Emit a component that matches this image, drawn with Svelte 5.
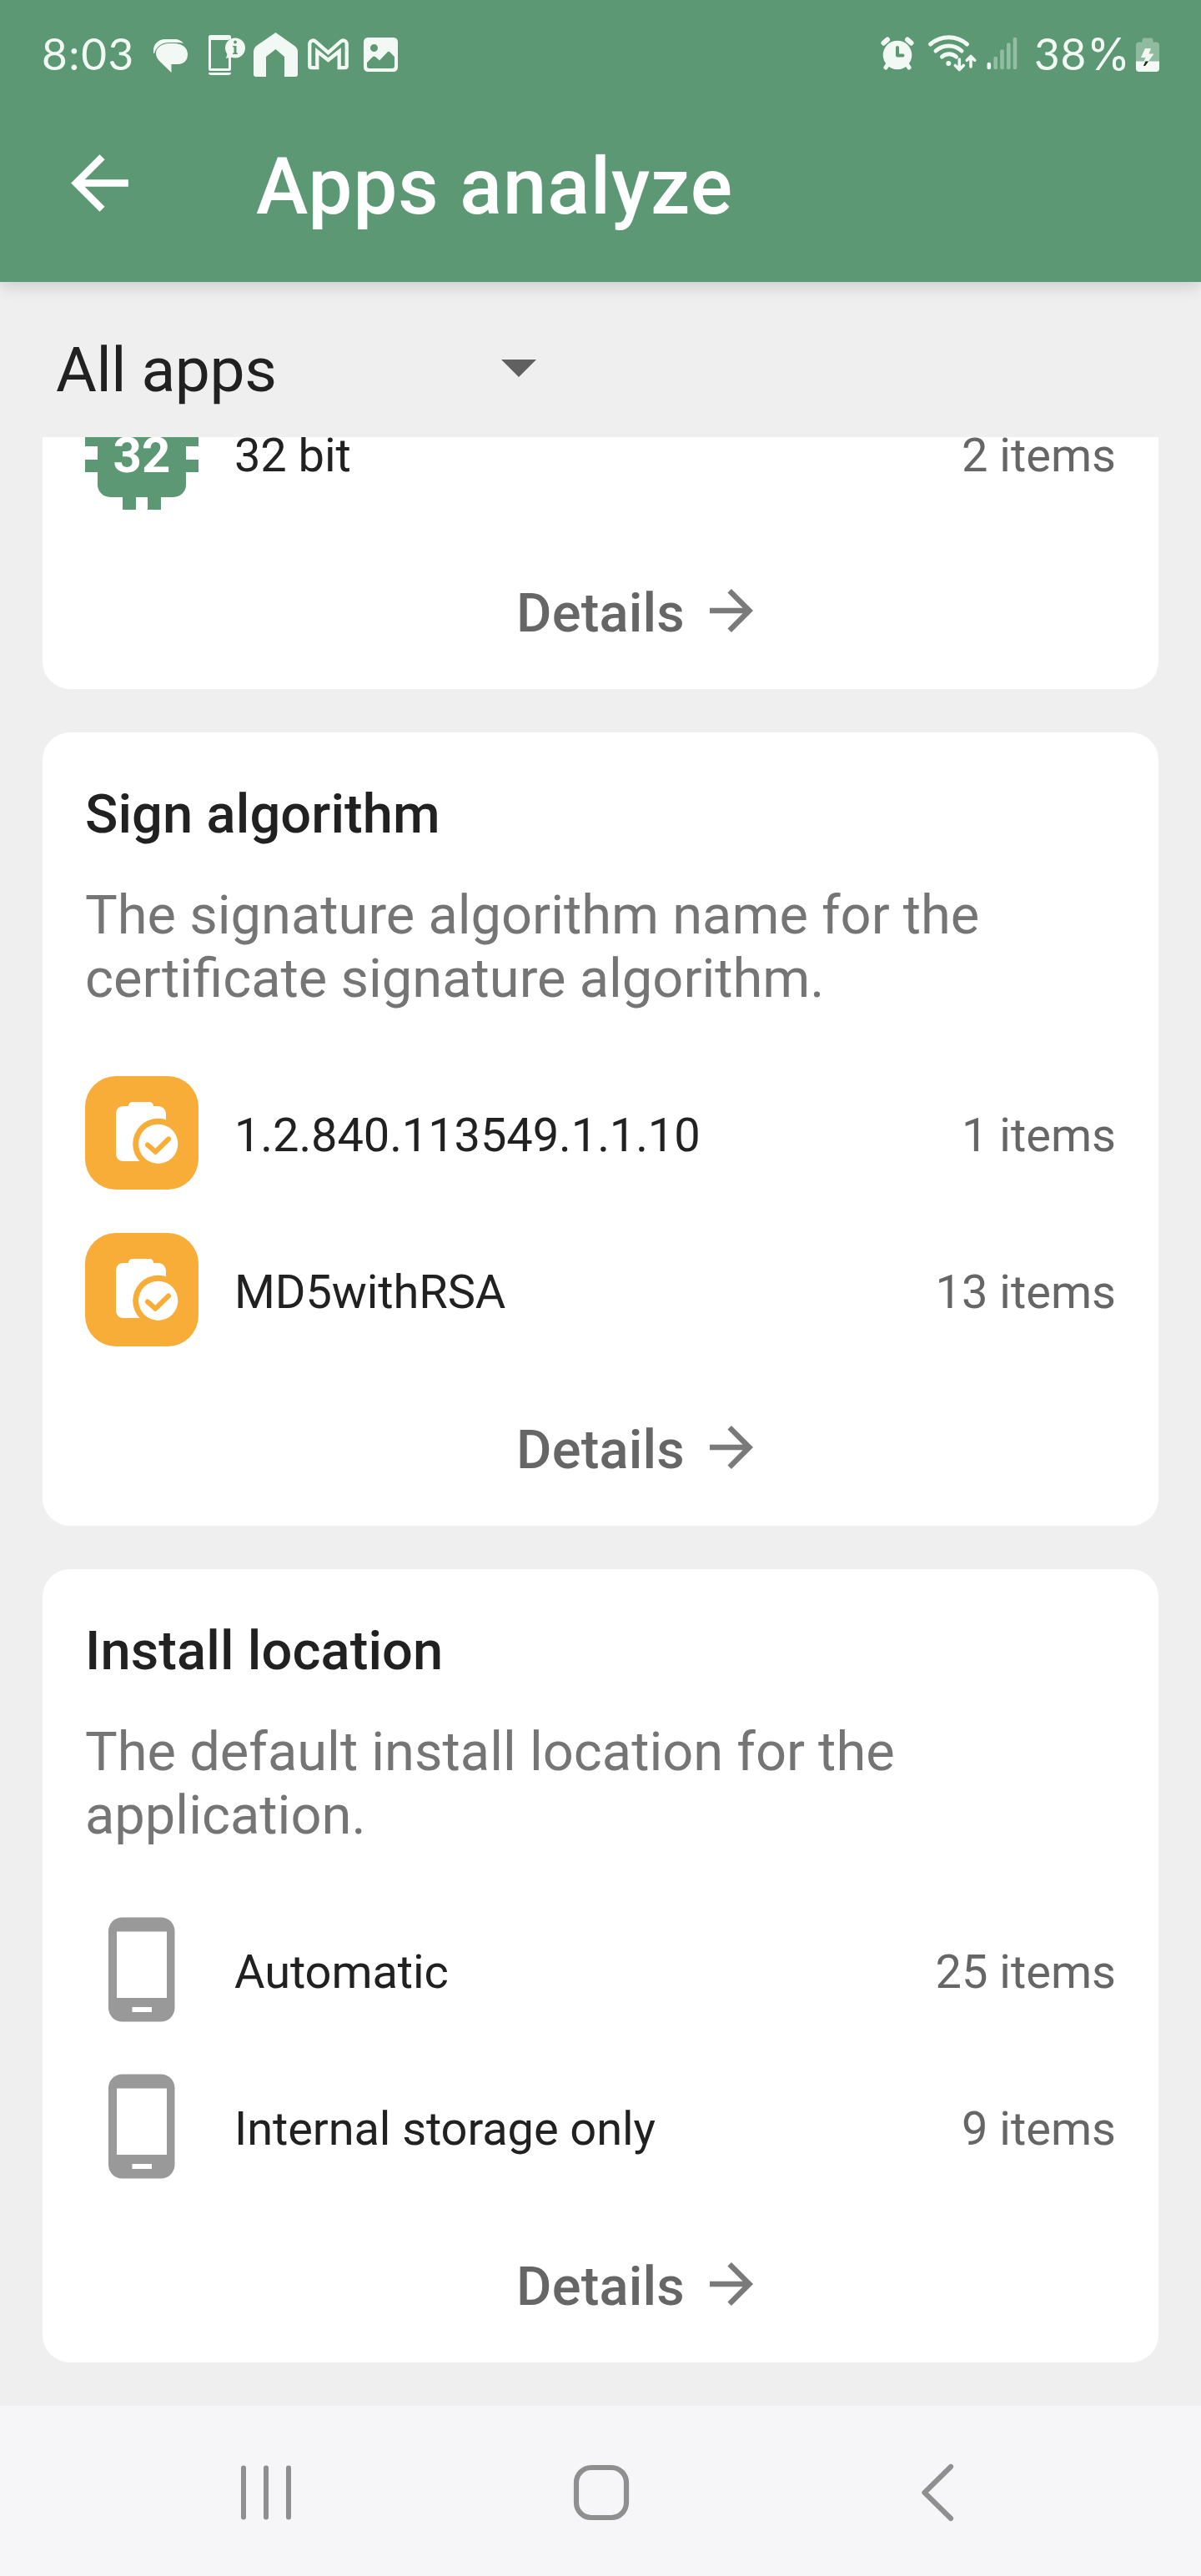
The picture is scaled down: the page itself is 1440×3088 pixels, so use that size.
<script>
  const cards = [
    {
      title: 'Sign algorithm',
      text: 'The signature algorithm name for the certificate signature algorithm.',
      icon: 'clipboard',
      rows: [
        { name: '1.2.840.113549.1.1.10', count: '1 items' },
        { name: 'MD5withRSA', count: '13 items' }
      ]
    },
    {
      title: 'Install location',
      text: 'The default install location for the application.',
      icon: 'phone',
      rows: [
        { name: 'Automatic', count: '25 items' },
        { name: 'Internal storage only', count: '9 items' }
      ]
    }
  ];
</script>

{#snippet icon(kind)}
  <svg class="icon" viewBox="0 0 136 136">
    {#if kind === 'chip'}
      <g fill="#5b9873">
        <rect x="15" y="15" width="106" height="106" rx="15" />
        <path d="M45 0h16v136H45zM75 0h16v136H75zM0 45h136v15H0zM0 76h136v15H0z" />
      </g>
      <text class="chip-text" x="68" y="91" text-anchor="middle">32</text>
    {:else if kind === 'clipboard'}
      <rect width="136" height="136" rx="37" fill="#f8ad39" />
      <path d="M46 36h6c0-3 2-5 5-5h20c3 0 5 2 5 5h5c6 0 10 4 10 10v46c0 6-4 10-10 10H46c-6 0-9-4-9-10V46c0-6 3-10 9-10z" fill="#fff" />
      <circle cx="87.7" cy="81.3" r="30.5" fill="#f8ad39" />
      <circle cx="87.7" cy="81.3" r="23.6" fill="#fff" />
      <path d="M75 82.5l9.300 8.300L100 75.500" fill="none" stroke="#f8ad39" stroke-width="6" stroke-linecap="round" stroke-linejoin="round" />
    {:else}
      <rect x="28" y="5.500" width="79.500" height="125" rx="16.500" fill="#999" />
      <path d="M38 22.500h60V102H38zM56.500 113H80v6H56.500z" fill="#fff" />
    {/if}
  </svg>
{/snippet}

{#snippet row(kind, name, count)}
  <div class="row">
    {@render icon(kind)}
    <span class="name">{name}</span>
    <span class="count">{count}</span>
  </div>
{/snippet}

{#snippet details()}
  <div class="details">
    <span class="details-label">Details</span>
    <svg class="forward" viewBox="0 0 24 24"><path d="M12 4l-1.410 1.410L16.170 11H4v2h12.170l-5.580 5.590L12 20l8-8z" /></svg>
  </div>
{/snippet}

<div class="screen">
  <header>
    <div class="status">
      <span class="clock">8:03</span>
      <svg class="notifications" viewBox="180 30 300 70" fill="#f2f8f3">
        <path d="M184 64V60c0-7 6-13 14-13h12c4 0 8 2 10 5-2-1-5-1-8-1h-9c-9 0-15 4-18 13z" />
        <path d="M203 52h6c9 0 16 5 16 13s-5 12-12 12h-7.500v10L192 74c-3-3-5-6-5-10 0-7 7-12 16-12z" />
        <path fill-rule="evenodd" d="M252 42h23c1 0 2 1 2 2v3c-2 0-3 1-4 1H253v34h21V69l3-1v15c0 1-1 2-2 2h-23c-1 0-2-1-2-2V44c0-1 1-2 2-2z" />
        <path d="M250 87h27c0 2-1 3-3 3h-21c-2 0-3-1-3-3z" />
        <circle cx="282" cy="57.500" r="12" />
        <path d="M273 63l-2 7 9-2z" />
        <g fill="#5b9873"><circle cx="282" cy="50.500" r="1.900" /><path d="M279 55h4.500v8.500h1.500V65h-6v-1.500h1.500v-7H279z" /></g>
        <path d="M330.500 39l22 15.500c3 2 4.500 4 4.500 7.500v27c0 2-1 3-3 3h-13V68l-10.500-9L319 68v24h-12c-2 0-3-1-3-3V62c0-3 1.500-5.500 4-7.500z" />
        <path d="M371.300 53v26c0 1.500.7 2.200 2.200 2.200h6.800V61.500L393.500 72l13.200-10.500v19.700h6.800c1.500 0 2.200-.7 2.200-2.200V53c0-4-4.200-6-7.200-3.200l-15 13.400-15-13.400c-3-2.800-7.200-.8-7.200 3.200z" fill="none" stroke="#f2f8f3" stroke-width="4.300" />
        <path fill-rule="evenodd" d="M442 45h29c4 0 6 2 6 6v29c0 4-2 6-6 6h-29c-4 0-6-2-6-6V51c0-4 2-6 6-6zM448.500 53a4.500 4.500 0 1 0 0 9 4.500 4.500 0 0 0 0-9zM440 75v4c0 2 1 3 3 3h27c2 0 3-1 3-3V68l-5.500-5.500c-1-1-2-1-3 0L455 72.500l-5-4.500c-1-.8-2-.8-3 0z" />
      </svg>
      <svg class="signals" viewBox="1050 30 180 70" fill="none" stroke="#f2f8f3" stroke-linecap="round" stroke-linejoin="round">
        <circle cx="1076" cy="66" r="17.300" fill="#f2f8f3" stroke="none" />
        <path d="M1059.500 51.500l4.500-4M1092.500 51.500l-4.500-4" stroke-width="6" />
        <path d="M1064 78l-2 3M1088 78l2 3" stroke-width="5" />
        <path d="M1076 57v9.500h6.500" stroke="#5b9873" stroke-width="4" />
        <path d="M1115.500 53c13-11 31-11 44 0M1122 61c9-8 22-8 31 0M1129.500 68c5-4.500 12-4.500 17 0" stroke-width="5" />
        <circle cx="1137.300" cy="76" r="3" fill="#f2f8f3" stroke="none" />
        <path d="M1150.300 71v12.500m-5-5l5 5 5-5M1164 80V67.500m-4.700 4.700l4.700-4.700 4.700 4.700" stroke-width="3.600" />
        <path d="M1185.800 77v4" stroke-width="4.600" />
        <path d="M1193.700 70v11M1201.500 61.500V81M1209.300 53.500V81M1217 47V81" stroke-width="4.600" stroke="#94bea3" />
      </svg>
      <span class="percent">38<span class="sign">%</span></span>
      <svg class="battery" viewBox="1362 44 28 41">
        <path d="M1372 44.500h8c2 0 2.500 1 2.500 2.500v2.500h3.500c3 0 4 1.500 4 4V73h-28V53.500c0-2.500 1-4 4-4h3.500V47c0-1.500.5-2.500 2.500-2.500z" fill="#91bba0" />
        <path d="M1362 72.500h28V81c0 2.500-1 4-4 4h-20c-3 0-4-1.500-4-4z" fill="#f2f8f3" />
        <path d="M1373 57h7l-2.500 6.500h6l-6.500 9h-5.500l2-4.500h-5.500z" fill="#f2f8f3" />
        <path d="M1373.500 72.500h3.500l-4 5.500h-2z" fill="#15221a" />
      </svg>
    </div>
    <div class="toolbar">
      <svg class="back" viewBox="0 0 24 24"><path d="M20 11H7.830l5.590-5.590L12 4l-8 8 8 8 1.410-1.410L7.830 13H20z" /></svg>
      <h1>Apps analyze</h1>
    </div>
  </header>

  <div class="filter">
    <span class="filter-label">All apps</span>
    <svg class="caret" viewBox="0 0 42 21"><path d="M0 0h42L21 21z" fill="#606060" /></svg>
  </div>

  <main>
    <section class="card scrolled">
      {@render row('chip', '32 bit', '2 items')}
      {@render details()}
    </section>
    {#each cards as card}
      <section class="card">
        <h2>{card.title}</h2>
        <p>{card.text}</p>
        <div class="rows">
          {#each card.rows as r}
            {@render row(card.icon, r.name, r.count)}
          {/each}
        </div>
        {@render details()}
      </section>
    {/each}
  </main>

  <nav>
    <svg viewBox="279 2948 80 80"><path d="M292 2958.500v59M319 2958.500v59M346 2958.500v59" stroke-width="6" /></svg>
    <svg viewBox="680 2948 80 80"><rect x="691" y="2958" width="60" height="60" rx="18" stroke-width="6.200" /></svg>
    <svg viewBox="1081 2948 80 80"><path d="M1140 2957l-31.500 31 31.500 31" stroke-width="6.200" /></svg>
  </nav>
</div>

<style>
  :global(body) { margin: 0; background: #efefef; }
  .screen {
    width: 1440px;
    height: 3088px;
    display: flex;
    flex-direction: column;
    background: #efefef;
    color: #212121;
    font-family: Roboto, sans-serif;
    overflow: hidden;
  }
  svg { display: block; flex: none; }
  h1, h2, p { margin: 0; }

  header {
    height: 338px;
    flex: none;
    background: #5b9873;
    box-shadow: 0 4px 20px rgba(0, 0, 0, 0.17);
  }
  .status {
    height: 130px;
    display: flex;
    align-items: center;
    color: #f2f8f3;
    font: 400 53px/64px Lato, sans-serif;
  }
  .clock { width: 130px; padding: 0 0 2px 50px; letter-spacing: 1.6px; }
  .notifications { width: 300px; height: 70px; }
  .signals { width: 180px; height: 70px; margin-left: 570px; }
  .percent { width: 122px; margin-left: 10px; padding-bottom: 2px; letter-spacing: 0.8px; white-space: nowrap; }
  .sign { font-family: Inter, sans-serif; letter-spacing: 0; }
  .battery { width: 28px; height: 41px; }
  .toolbar {
    height: 180px;
    display: flex;
    align-items: center;
  }
  .back { width: 103px; height: 103px; margin: -2px 0 0 68px; fill: #fff; }
  h1 {
    margin-left: 136px;
    padding-top: 7px;
    color: #fff;
    font-size: 94px;
    line-height: 110px;
    font-weight: 500;
    letter-spacing: 1.05px;
  }

  .filter {
    height: 186px;
    flex: none;
    display: flex;
    align-items: center;
  }
  .filter-label {
    width: 534px;
    padding: 24px 0 0 67px;
    font-size: 75px;
    line-height: 88px;
    letter-spacing: -0.4px;
  }
  .caret { width: 42px; height: 21px; margin-top: 21px; }

  main {
    height: 2360px;
    flex: none;
    display: flex;
    flex-direction: column;
    gap: 52px;
    padding: 0 51px;
    box-sizing: border-box;
    overflow: hidden;
  }
  .card {
    height: 951px;
    flex: none;
    box-sizing: border-box;
    padding: 60px 51px 0;
    border-radius: 33px;
    background: #fff;
  }
  .scrolled {
    height: 302px;
    padding-top: 0;
    border-radius: 0 0 33px 33px;
    overflow: hidden;
  }
  .scrolled .row { margin-top: -49px; }
  h2 { font-size: 65px; line-height: 76px; font-weight: 500; letter-spacing: 0.1px; }
  p {
    margin-top: 45px;
    color: #757575;
    font-size: 65px;
    line-height: 76px;
  }
  .rows {
    display: flex;
    flex-direction: column;
    gap: 52px;
    margin-top: 79px;
  }
  .row { display: flex; align-items: center; height: 136px; }
  .icon { width: 136px; height: 136px; }
  .chip-text { font: 700 60px Roboto, sans-serif; fill: #fff; }
  .name, .count { padding-top: 6px; font-size: 56px; line-height: 66px; }
  .name { flex: 1; margin-left: 43px; letter-spacing: -0.1px; }
  .count { color: #666; }
  .details {
    display: grid;
    grid-template-columns: 1fr auto 1fr;
    align-items: center;
    margin-top: 86px;
    color: #666;
    font-size: 65px;
    line-height: 76px;
    font-weight: 500;
  }
  .details-label { grid-column: 2; letter-spacing: 0.2px; }
  .forward { width: 78px; height: 78px; margin: -16px 0 -10px 17px; fill: #7a7a7a; }

  nav {
    height: 204px;
    flex: none;
    display: grid;
    grid-template-columns: repeat(3, 1fr);
    place-items: center;
    padding: 4px 118px 0;
    box-sizing: border-box;
    background: #f6f6f8;
  }
  nav svg {
    width: 80px;
    height: 80px;
    fill: none;
    stroke: #8f8f8f;
    stroke-linecap: round;
    stroke-linejoin: round;
  }
</style>
